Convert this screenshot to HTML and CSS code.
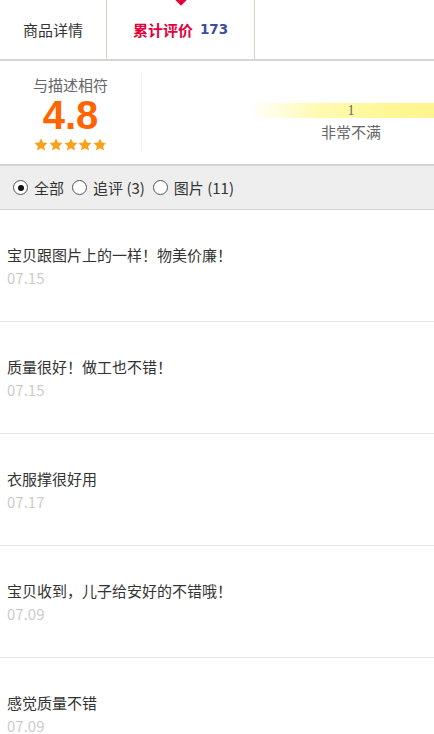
FILE: index.html
```html
<!DOCTYPE html>
<html lang="zh-CN">
<head>
<meta charset="utf-8">
<title>累计评价</title>
<link rel="stylesheet" href="styles.css">
</head>
<body>
<div class="page">
  <div class="tabs">
    <div class="tab">商品详情</div>
    <div class="tab tab-active">
      <span class="tab-arrow"></span>
      <span class="tab-label">累计评价</span><span class="tab-count">173</span>
    </div>
    <div class="tab-rest"></div>
  </div>

  <div class="score">
    <div class="score-left">
      <div class="score-title">与描述相符</div>
      <div class="score-num">4.8</div>
      <div class="stars">
        <svg class="star" viewBox="0 0 14 13"><path d="M7 0.4 L8.95 4.55 L13.5 5.05 L10.1 8.15 L11.05 12.6 L7 10.3 L2.95 12.6 L3.9 8.15 L0.5 5.05 L5.05 4.55 Z"/></svg>
        <svg class="star" viewBox="0 0 14 13"><path d="M7 0.4 L8.95 4.55 L13.5 5.05 L10.1 8.15 L11.05 12.6 L7 10.3 L2.95 12.6 L3.9 8.15 L0.5 5.05 L5.05 4.55 Z"/></svg>
        <svg class="star" viewBox="0 0 14 13"><path d="M7 0.4 L8.95 4.55 L13.5 5.05 L10.1 8.15 L11.05 12.6 L7 10.3 L2.95 12.6 L3.9 8.15 L0.5 5.05 L5.05 4.55 Z"/></svg>
        <svg class="star" viewBox="0 0 14 13"><path d="M7 0.4 L8.95 4.55 L13.5 5.05 L10.1 8.15 L11.05 12.6 L7 10.3 L2.95 12.6 L3.9 8.15 L0.5 5.05 L5.05 4.55 Z"/></svg>
        <svg class="star" viewBox="0 0 14 13"><defs><linearGradient id="part" x1="0" x2="1" y1="0" y2="0"><stop offset="0.8" stop-color="#f9a11b"/><stop offset="0.8" stop-color="#fbc15e"/></linearGradient></defs><path fill="url(#part)" d="M7 0.4 L8.95 4.55 L13.5 5.05 L10.1 8.15 L11.05 12.6 L7 10.3 L2.95 12.6 L3.9 8.15 L0.5 5.05 L5.05 4.55 Z"/></svg>
      </div>
    </div>
    <div class="score-right">
      <div class="level">
        <div class="level-bar">1</div>
        <div class="level-name">非常不满</div>
      </div>
    </div>
  </div>

  <div class="filter">
    <label class="opt"><span class="radio radio-on"></span><span>全部</span></label>
    <label class="opt"><span class="radio"></span><span>追评 (3)</span></label>
    <label class="opt"><span class="radio"></span><span>图片 (11)</span></label>
  </div>

  <ul class="reviews">
    <li class="review"><p class="review-text">宝贝跟图片上的一样！物美价廉！</p><p class="review-date">07.15</p></li>
    <li class="review"><p class="review-text">质量很好！做工也不错！</p><p class="review-date">07.15</p></li>
    <li class="review"><p class="review-text">衣服撑很好用</p><p class="review-date">07.17</p></li>
    <li class="review"><p class="review-text">宝贝收到，儿子给安好的不错哦！</p><p class="review-date">07.09</p></li>
    <li class="review"><p class="review-text">感觉质量不错</p><p class="review-date">07.09</p></li>
  </ul>
</div>
</body>
</html>
```

FILE: styles.css
```css
html, body {
  margin: 0;
  padding: 0;
  background: #fff;
  overflow: hidden;
}

.page {
  width: 434px;
  overflow: hidden;
  font-family: "Noto Sans CJK SC", "Microsoft YaHei", sans-serif;
  color: #333;
  font-size: 15px;
}

/* tabs */
.tabs {
  display: flex;
  height: 59px;
  border-bottom: 2px solid #d6d6d6;
}

.tab {
  position: relative;
  width: 107px;
  display: flex;
  align-items: center;
  justify-content: center;
  border-right: 1px solid #d9d0c7;
  font-size: 15px;
  color: #333;
  padding-bottom: 1px;
  box-sizing: border-box;
}

.tab-active {
  width: 148px;
}

.tab-rest {
  flex: 1;
}

.tab-arrow {
  position: absolute;
  top: -4px;
  left: 50%;
  width: 8px;
  height: 8px;
  margin-left: -4px;
  background: #e4003a;
  transform: rotate(45deg);
}

.tab-label {
  color: #e4003a;
  font-weight: bold;
}

.tab-count {
  margin-left: 7px;
  color: #3c4e9c;
  font-family: "DejaVu Sans", sans-serif;
  font-weight: bold;
  font-size: 13.5px;
}

/* score */
.score {
  display: flex;
  padding: 12px 0 13px;
  border-bottom: 2px solid #d3d3d3;
}

.score-left {
  width: 142px;
  box-sizing: border-box;
  padding-top: 2px;
  border-right: 1px solid #f0f0f0;
  display: flex;
  flex-direction: column;
  align-items: center;
}

.score-title {
  font-size: 15px;
  line-height: 20px;
  color: #666;
}

.score-num {
  font-family: "Liberation Sans", Arial, sans-serif;
  font-weight: bold;
  font-size: 40px;
  line-height: 40px;
  color: #ff6400;
}

.stars {
  display: flex;
  gap: 0.7px;
  margin-top: 3px;
  height: 13px;
}

.star {
  width: 14px;
  height: 13px;
  fill: #f9a11b;
}

.score-right {
  flex: 1;
  position: relative;
}

.level {
  position: absolute;
  left: 107px;
  top: 30px;
  width: 204px;
  display: flex;
  flex-direction: column;
  align-items: center;
}

.level-bar {
  width: 100%;
  height: 15px;
  line-height: 15px;
  text-align: center;
  font-family: "Liberation Serif", serif;
  font-size: 14px;
  color: #666;
  background: linear-gradient(to right, rgba(255, 250, 170, 0) 0%, #fffab0 35%, #fff795 70%, #fff38a 100%);
}

.level-name {
  margin-top: 4px;
  font-size: 15px;
  line-height: 20px;
  color: #666;
}

/* filter */
.filter {
  display: flex;
  align-items: center;
  height: 43px;
  padding-left: 13px;
  background: #eee;
  border-bottom: 1px solid #d3d3d3;
  font-size: 15px;
  color: #333;
}

.opt {
  display: flex;
  align-items: center;
  gap: 6px;
  margin-right: 8px;
}

.radio {
  width: 13px;
  height: 13px;
  border: 1px solid #555;
  border-radius: 50%;
  background: #fff;
  position: relative;
  box-sizing: border-box;
  width: 15px;
  height: 15px;
}

.radio-on::after {
  content: "";
  position: absolute;
  left: 3.5px;
  top: 3.5px;
  width: 6px;
  height: 6px;
  border-radius: 50%;
  background: #111;
}

/* reviews */
.reviews {
  list-style: none;
  margin: 0;
  padding: 0;
}

.review {
  padding: 34px 0 32px 7px;
  border-bottom: 1px solid #e6e6e6;
}

.review-text {
  margin: 0;
  font-size: 15px;
  line-height: 22px;
  color: #333;
}

.review-date {
  margin: 1px 0 0;
  font-size: 15px;
  line-height: 22px;
  color: #ccc;
}
```
